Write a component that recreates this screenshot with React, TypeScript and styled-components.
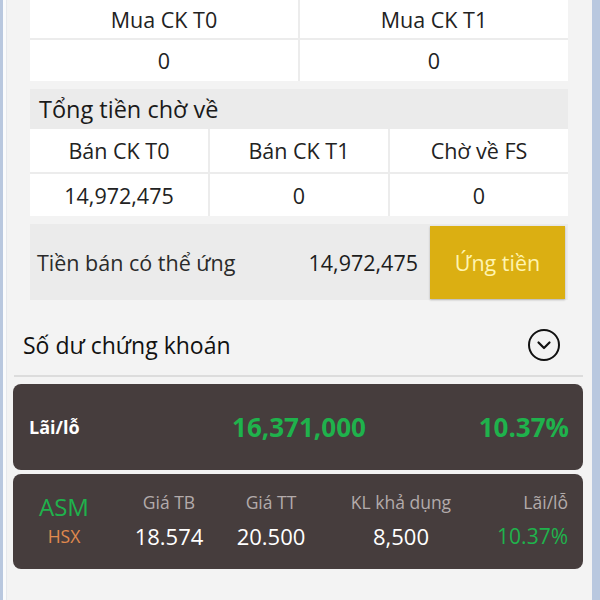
import React from "react";
import styled, { createGlobalStyle } from "styled-components";

const GlobalStyle = createGlobalStyle`
  html, body {
    margin: 0;
    padding: 0;
    background: #f3f3f3;
  }
  * {
    box-sizing: border-box;
  }
`;

const Frame = styled.div`
  position: relative;
  width: 600px;
  height: 600px;
  overflow: hidden;
  display: flex;
  border-left: 3px solid #b9c8df;
  border-right: 8px solid #b9c8df;
  background: #f3f3f3;
  font-family: "Open Sans", "Noto Sans", sans-serif;
`;

const EdgeShade = styled.div<{ width: number }>`
  width: ${(p) => p.width}px;
  flex-shrink: 0;
  background: #fafbfc;
  border-right: 1px solid #e6e8ec;
`;

const Main = styled.div`
  flex: 1;
  display: flex;
  flex-direction: column;
`;

const Block = styled.div`
  margin: 0 24px 0 23px;
`;

const Grid = styled.div<{ cols: number }>`
  display: grid;
  grid-template-columns: repeat(${(p) => p.cols}, 1fr);
  gap: 2px;
  background: #ececec;
`;

const Cell = styled.div<{ h: number }>`
  height: ${(p) => p.h}px;
  background: #ffffff;
  display: flex;
  align-items: center;
  justify-content: center;
  color: #222;
  font-size: 21.5px;
`;

const GroupTitle = styled.div`
  margin-top: 8px;
  height: 40px;
  background: #ebebeb;
  display: flex;
  align-items: center;
  padding-left: 9px;
  font-size: 23.5px;
  color: #1a1a1a;
`;

const AdvanceRow = styled.div`
  margin-top: 8px;
  height: 76px;
  background: #ebebeb;
  display: flex;
  align-items: center;
  padding: 0 3px 0 7px;
  font-size: 21.5px;
  color: #2a2a2a;
`;

const AdvanceLabel = styled.div`
  flex: 1;
`;

const AdvanceValue = styled.div`
  margin-right: 12px;
  color: #1c1c1c;
`;

const AdvanceButton = styled.button`
  width: 135px;
  height: 73px;
  border: none;
  background: #dbaf12;
  color: #fff4b0;
  font-family: inherit;
  font-size: 21.5px;
  box-shadow: 0 1px 2px rgba(0, 0, 0, 0.25);
`;

const SectionHead = styled.div`
  margin: 0 9px 0 7px;
  height: 77px;
  display: flex;
  align-items: center;
  justify-content: space-between;
  padding: 14px 22px 0 9px;
  border-bottom: 2px solid #dcdcdc;
  font-size: 23px;
  color: #111;
`;

const DarkCard = styled.div<{ h: number }>`
  margin: 0 9px 0 6px;
  height: ${(p) => p.h}px;
  background: #463d3d;
  border-radius: 8px;
  display: flex;
  align-items: center;
`;

const TotalRow = styled(DarkCard)`
  margin-top: 7px;
  padding: 0 14px 0 16px;
  justify-content: space-between;
`;

const TotalLabel = styled.div`
  width: 150px;
  color: #fff;
  font-weight: 700;
  font-size: 18px;
`;

const Green = styled.div<{ size: number; bold?: boolean }>`
  color: #1fb24c;
  font-size: ${(p) => p.size}px;
  font-weight: ${(p) => (p.bold ? 700 : 400)};
`;

const HoldingRow = styled(DarkCard)`
  margin-top: 4px;
  padding: 0 14px 4px 15px;
`;

const Ticker = styled.div`
  width: 72px;
  display: flex;
  flex-direction: column;
  align-items: center;
  gap: 2px;
`;

const Symbol = styled.div`
  color: #1fb24c;
  font-size: 24px;
  line-height: 30px;
`;

const Market = styled.div`
  color: #e08a4e;
  font-size: 17.5px;
  line-height: 24px;
`;

const Col = styled.div<{ w: number; align?: string }>`
  width: ${(p) => p.w}px;
  display: flex;
  flex-direction: column;
  align-items: ${(p) => p.align || "center"};
  gap: 10px;
`;

const ColLabel = styled.div`
  color: #b3abab;
  font-size: 17.5px;
  line-height: 22px;
`;

const ColValue = styled.div<{ green?: boolean }>`
  color: ${(p) => (p.green ? "#1fb24c" : "#ffffff")};
  font-size: ${(p) => (p.green ? 21 : 22)}px;
  line-height: 26px;
`;

const Handle = styled.div`
  position: absolute;
  right: -6px;
  top: 341px;
  width: 6px;
  height: 7px;
  background: #fff;
  border: 1px solid #666;
`;

const CircleChevron = () => (
  <svg width="34" height="34" viewBox="0 0 34 34" fill="none">
    <circle cx="17" cy="17" r="15" stroke="#111" strokeWidth="2" />
    <path d="M11.5 14.5 L17 20 L22.5 14.5" stroke="#111" strokeWidth="2.2" strokeLinecap="round" strokeLinejoin="round" />
  </svg>
);

export default function App() {
  return (
    <>
      <GlobalStyle />
      <Frame>
        <EdgeShade width={4} />
        <Main>
          <Block>
            <Grid cols={2}>
              <Cell h={38}>Mua CK T0</Cell>
              <Cell h={38}>Mua CK T1</Cell>
              <Cell h={41}>0</Cell>
              <Cell h={41}>0</Cell>
            </Grid>
            <GroupTitle>Tổng tiền chờ về</GroupTitle>
            <Grid cols={3}>
              <Cell h={43}>Bán CK T0</Cell>
              <Cell h={43}>Bán CK T1</Cell>
              <Cell h={43}>Chờ về FS</Cell>
              <Cell h={42}>14,972,475</Cell>
              <Cell h={42}>0</Cell>
              <Cell h={42}>0</Cell>
            </Grid>
            <AdvanceRow>
              <AdvanceLabel>Tiền bán có thể ứng</AdvanceLabel>
              <AdvanceValue>14,972,475</AdvanceValue>
              <AdvanceButton>Ứng tiền</AdvanceButton>
            </AdvanceRow>
          </Block>
          <SectionHead>
            <span>Số dư chứng khoán</span>
            <CircleChevron />
          </SectionHead>
          <TotalRow h={86}>
            <TotalLabel>Lãi/lỗ</TotalLabel>
            <Green size={26} bold>16,371,000</Green>
            <Green size={26} bold style={{ width: 150, textAlign: "right" }}>10.37%</Green>
          </TotalRow>
          <HoldingRow h={95}>
            <Ticker>
              <Symbol>ASM</Symbol>
              <Market>HSX</Market>
            </Ticker>
            <Col w={138}>
              <ColLabel>Giá TB</ColLabel>
              <ColValue>18.574</ColValue>
            </Col>
            <Col w={66}>
              <ColLabel>Giá TT</ColLabel>
              <ColValue>20.500</ColValue>
            </Col>
            <Col w={194}>
              <ColLabel>KL khả dụng</ColLabel>
              <ColValue>8,500</ColValue>
            </Col>
            <Col w={70} align="flex-end">
              <ColLabel>Lãi/lỗ</ColLabel>
              <ColValue green>10.37%</ColValue>
            </Col>
          </HoldingRow>
        </Main>
        <Handle />
      </Frame>
    </>
  );
}
